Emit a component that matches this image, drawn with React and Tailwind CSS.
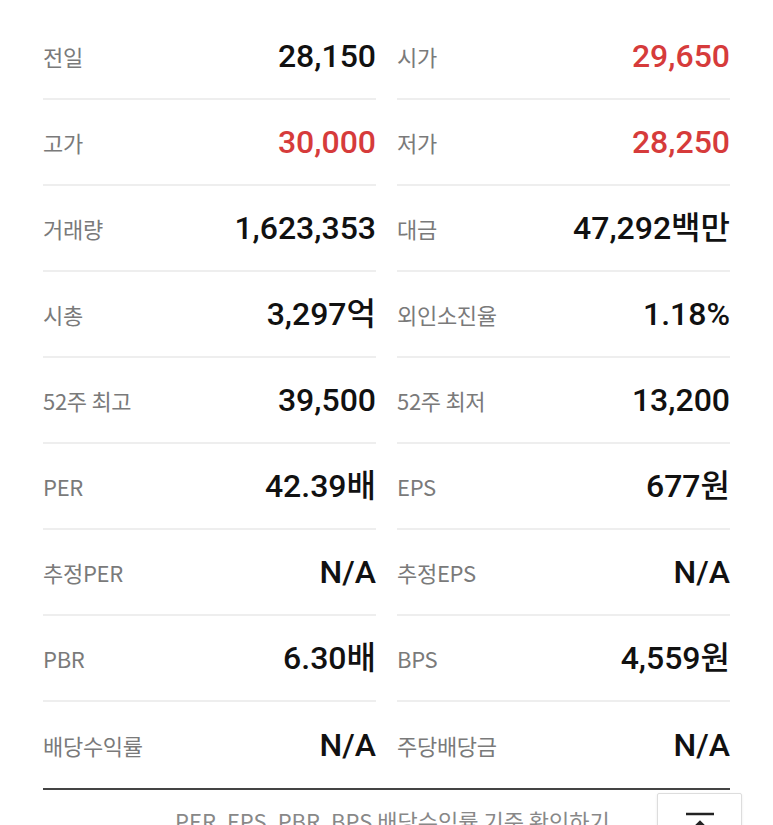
import React from "react";

const RED = "text-[#d63b3b]";

const rows = [
  [
    { l: "전일", v: "28,150" },
    { l: "시가", v: "29,650", red: true },
  ],
  [
    { l: "고가", v: "30,000", red: true },
    { l: "저가", v: "28,250", red: true },
  ],
  [
    { l: "거래량", v: "1,623,353" },
    { l: "대금", v: "47,292백만" },
  ],
  [
    { l: "시총", v: "3,297억" },
    { l: "외인소진율", v: "1.18%" },
  ],
  [
    { l: "52주 최고", v: "39,500" },
    { l: "52주 최저", v: "13,200" },
  ],
  [
    { l: "PER", v: "42.39배" },
    { l: "EPS", v: "677원" },
  ],
  [
    { l: "추정PER", v: "N/A" },
    { l: "추정EPS", v: "N/A" },
  ],
  [
    { l: "PBR", v: "6.30배" },
    { l: "BPS", v: "4,559원" },
  ],
  [
    { l: "배당수익률", v: "N/A" },
    { l: "주당배당금", v: "N/A" },
  ],
];

export default function App() {
  return (
    <div className="relative w-[773px] h-[825px] overflow-hidden bg-white font-['Roboto','Noto_Sans_CJK_KR',sans-serif]">
      <div className="px-[43px] pt-[14px]">
        <div className="grid grid-cols-2 gap-x-[21px]">
          {rows.map((row, i) =>
            row.map((c, j) => (
              <div
                key={i + "-" + j}
                className={
                  "flex h-[86px] items-center justify-between " +
                  (i < rows.length - 1 ? "border-b-2 border-[#eeeeee]" : "")
                }
              >
                <span className="font-['Noto_Sans_CJK_KR',sans-serif] text-[22px] text-[#7a7a7a] tracking-[-0.3px]">
                  {c.l}
                </span>
                <span
                  className={
                    "text-[32px] font-medium " +
                    (c.red ? RED : "text-[#111111]")
                  }
                >
                  {c.v}
                </span>
              </div>
            ))
          )}
        </div>
        <div className="h-[2px] bg-[#444444]" />
        <div className="pt-[14px] pl-[132px] font-['Noto_Sans_CJK_KR',sans-serif] text-[22px] text-[#888888] whitespace-nowrap">
          PER, EPS, PBR, BPS 배당수익률 기준 확인하기
        </div>
      </div>
      <button className="absolute left-[657px] top-[793px] flex h-[86px] w-[85px] justify-center rounded-[2px] border border-[#dddddd] bg-white pt-[18px] shadow-[0_1px_3px_rgba(0,0,0,0.08)]">
        <svg width="32" height="32" viewBox="0 0 32 32" fill="none" stroke="#222" strokeWidth="2.5">
          <line x1="2" y1="2" x2="30" y2="2" />
          <path d="M16 30 V10 M7 19 L16 10 L25 19" />
        </svg>
      </button>
    </div>
  );
}
